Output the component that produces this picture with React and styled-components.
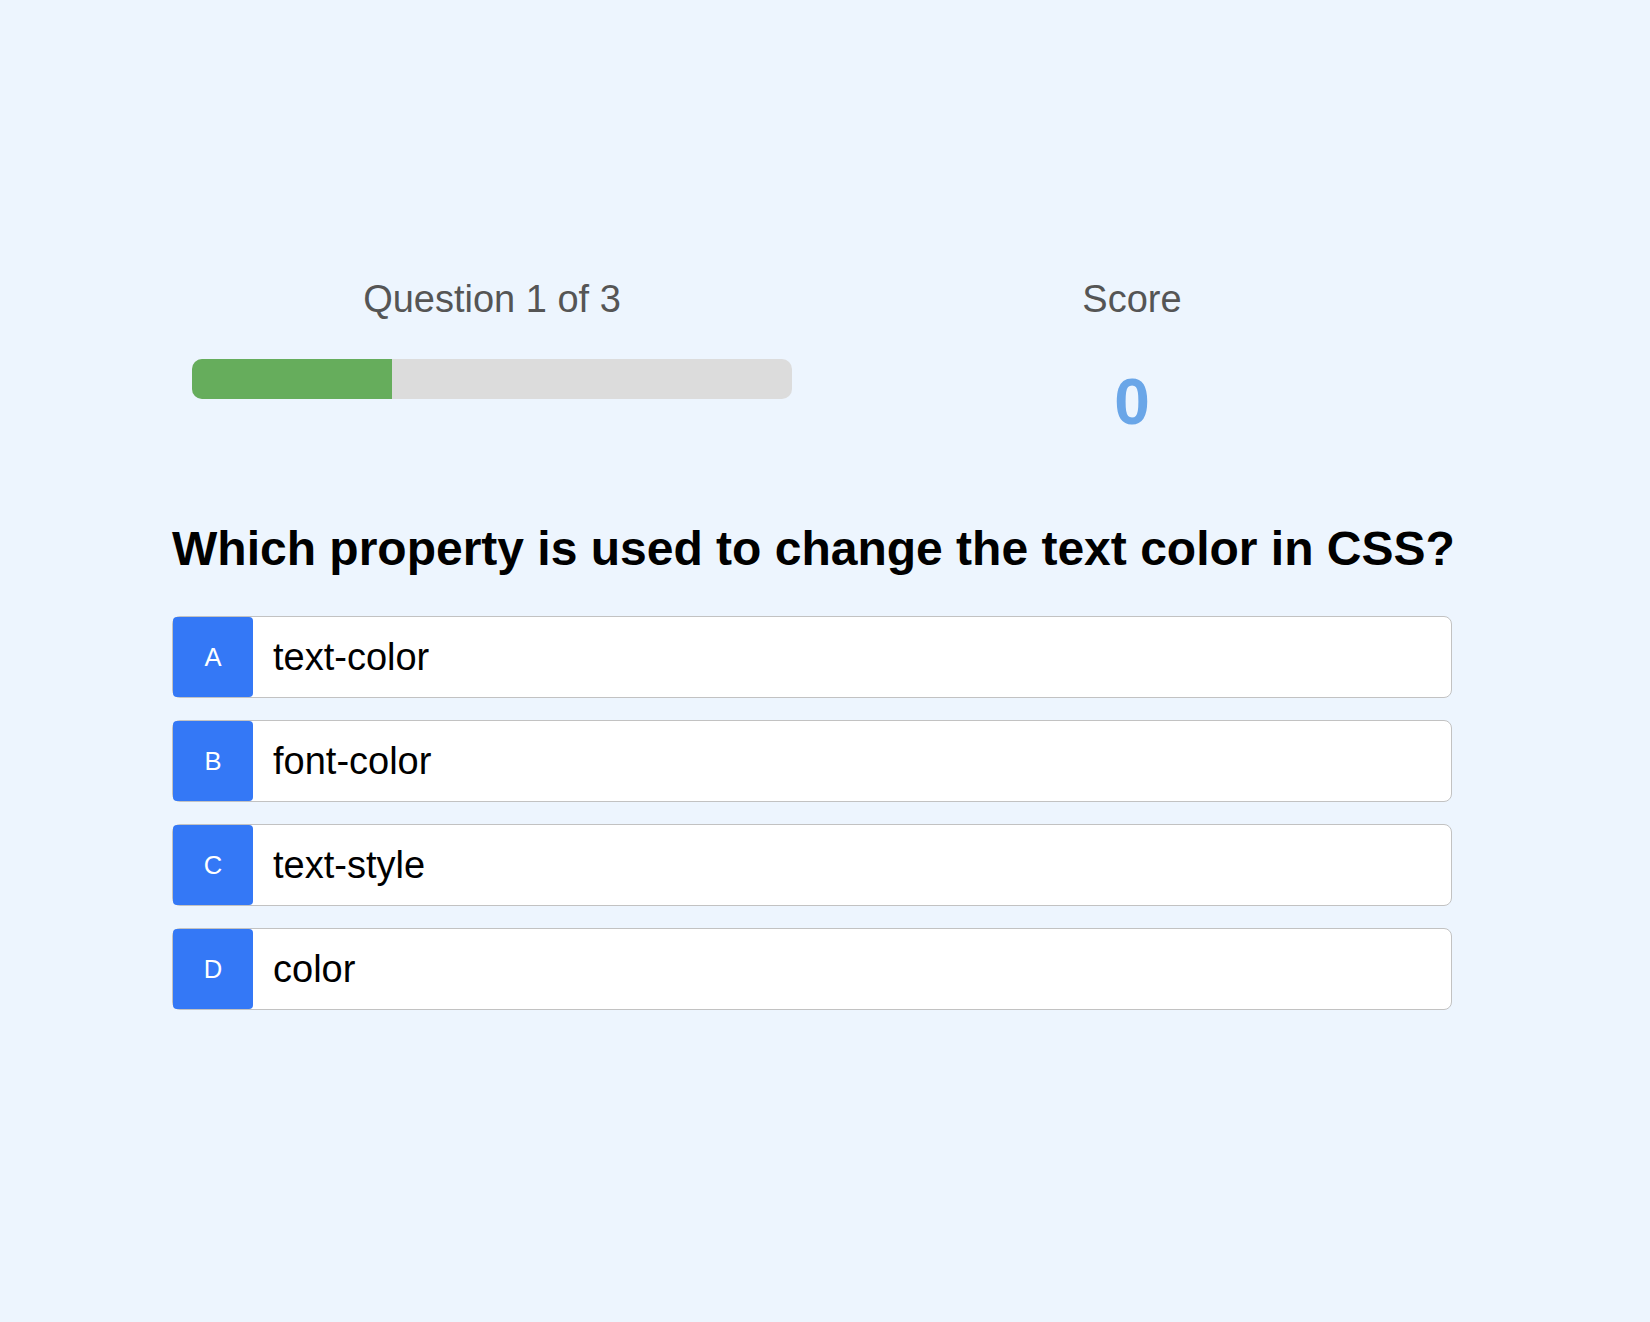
import styled, {createGlobalStyle} from 'styled-components';

const questions = [
  {
    text: 'Which property is used to change the text color in CSS?',
    options: ['text-color', 'font-color', 'text-style', 'color'],
  },
  {text: '', options: []},
  {text: '', options: []},
];

const letters = ['A', 'B', 'C', 'D'];

const App = () => {
  const current = 0;
  const score = 0;
  const question = questions[current];
  const progress = ((current + 1) / questions.length) * 100;

  return (
    <Page>
      <GlobalStyle />
      <Quiz>
        <Stats>
          <StatColumn>
            <StatLabel>
              Question {current + 1} of {questions.length}
            </StatLabel>
            <ProgressTrack>
              <ProgressFill style={{width: `${progress}%`}} />
            </ProgressTrack>
          </StatColumn>
          <StatColumn>
            <StatLabel>Score</StatLabel>
            <ScoreValue>{score}</ScoreValue>
          </StatColumn>
        </Stats>

        <QuestionTitle>{question.text}</QuestionTitle>

        <OptionList>
          {question.options.map((option, idx) => (
            <Option key={option}>
              <OptionLetter>{letters[idx]}</OptionLetter>
              <OptionText>{option}</OptionText>
            </Option>
          ))}
        </OptionList>
      </Quiz>
    </Page>
  );
};

export default App;

const GlobalStyle = createGlobalStyle`
  body {
    margin: 0;
    background: #edf5fe;
    font-family: "Liberation Sans", Arial, sans-serif;
  }
`;

const Page = styled.div`
  min-height: 1322px;
  padding-top: 277px;
  box-sizing: border-box;
`;

const Quiz = styled.div`
  width: 1280px;
  margin-left: 172px;
`;

const Stats = styled.div`
  display: grid;
  grid-template-columns: 1fr 1fr;
`;

const StatColumn = styled.div`
  display: flex;
  flex-direction: column;
  align-items: center;
`;

const StatLabel = styled.div`
  font-size: 38px;
  line-height: 44px;
  color: #555555;
`;

const ProgressTrack = styled.div`
  width: 600px;
  height: 40px;
  margin-top: 38px;
  border-radius: 10px;
  background: #dcdcdc;
  overflow: hidden;
`;

const ProgressFill = styled.div`
  height: 100%;
  background: #66ad5c;
`;

const ScoreValue = styled.div`
  margin-top: 44px;
  font-size: 64px;
  line-height: 74px;
  font-weight: bold;
  color: #6aa6e8;
`;

const QuestionTitle = styled.h2`
  margin: 82px 0 40px;
  font-size: 48px;
  line-height: 55px;
  font-weight: bold;
  white-space: nowrap;
  color: #000000;
`;

const OptionList = styled.div`
  display: flex;
  flex-direction: column;
  gap: 22px;
`;

const Option = styled.div`
  display: flex;
  align-items: center;
  height: 80px;
  border: 1px solid #c2c2c2;
  border-radius: 8px;
  background: #ffffff;
  cursor: pointer;
`;

const OptionLetter = styled.div`
  display: flex;
  align-items: center;
  justify-content: center;
  width: 80px;
  height: 80px;
  border-radius: 4px;
  background: #3478f6;
  color: #ffffff;
  font-size: 25.6px;
`;

const OptionText = styled.div`
  padding-left: 20px;
  font-size: 38px;
  color: #000000;
`;
